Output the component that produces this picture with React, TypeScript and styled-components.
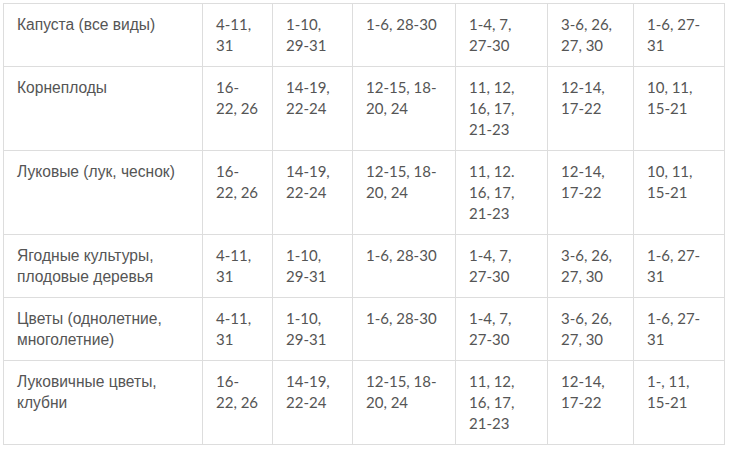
import styled, { createGlobalStyle } from 'styled-components';

const GlobalStyle = createGlobalStyle`
  body {
    margin: 0;
    background: #ffffff;
  }
`;

const widths = [199, 70, 80, 103, 92, 86, 91];

const rows: string[][] = [
  ['Капуста (все виды)', '4-11, 31', '1-10, 29-31', '1-6, 28-30', '1-4, 7, 27-30', '3-6, 26, 27, 30', '1-6, 27-31'],
  ['Корнеплоды', '16-22, 26', '14-19, 22-24', '12-15, 18-20, 24', '11, 12, 16, 17, 21-23', '12-14, 17-22', '10, 11, 15-21'],
  ['Луковые (лук, чеснок)', '16-22, 26', '14-19, 22-24', '12-15, 18-20, 24', '11, 12. 16, 17, 21-23', '12-14, 17-22', '10, 11, 15-21'],
  ['Ягодные культуры, плодовые деревья', '4-11, 31', '1-10, 29-31', '1-6, 28-30', '1-4, 7, 27-30', '3-6, 26, 27, 30', '1-6, 27-31'],
  ['Цветы (однолетние, многолетние)', '4-11, 31', '1-10, 29-31', '1-6, 28-30', '1-4, 7, 27-30', '3-6, 26, 27, 30', '1-6, 27-31'],
  ['Луковичные цветы, клубни', '16-22, 26', '14-19, 22-24', '12-15, 18-20, 24', '11, 12, 16, 17, 21-23', '12-14, 17-22', '1-, 11, 15-21'],
];

const App = () => {
  return (
    <>
      <GlobalStyle />
      <Wrapper>
        <Table>
          <colgroup>
            {widths.map((w, i) => (
              <col key={i} style={{ width: w }} />
            ))}
          </colgroup>
          <tbody>
            {rows.map((row, r) => (
              <tr key={r}>
                {row.map((cell, c) => (
                  <Cell key={c} $label={c === 0}>
                    {cell}
                  </Cell>
                ))}
              </tr>
            ))}
          </tbody>
        </Table>
      </Wrapper>
    </>
  );
};

export default App;

const Wrapper = styled.div`
  padding: 3px 0 0 3px;
`;

const Table = styled.table`
  width: 722px;
  table-layout: fixed;
  border-collapse: collapse;
  color: #555555;
  font-size: 15px;
  line-height: 21px;
`;

const Cell = styled.td<{ $label?: boolean }>`
  vertical-align: top;
  padding: 10px 13.5px 10px 13px;
  border: 1px solid #dddddd;
  text-align: left;
  font-family: ${(p) =>
    p.$label ? "'Liberation Sans', Arial, sans-serif" : "Lato, 'Liberation Sans', sans-serif"};
  font-size: ${(p) => (p.$label ? '15.6px' : '15px')};
`;
